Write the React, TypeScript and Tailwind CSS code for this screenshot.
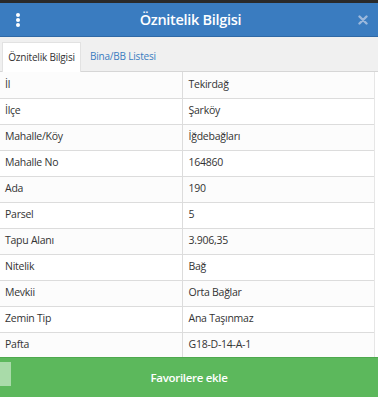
import React from "react"

const rows: [string, string][] = [
  ["İl", "Tekirdağ"],
  ["İlçe", "Şarköy"],
  ["Mahalle/Köy", "İğdebağları"],
  ["Mahalle No", "164860"],
  ["Ada", "190"],
  ["Parsel", "5"],
  ["Tapu Alanı", "3.906,35"],
  ["Nitelik", "Bağ"],
  ["Mevkii", "Orta Bağlar"],
  ["Zemin Tip", "Ana Taşınmaz"],
  ["Pafta", "G18-D-14-A-1"],
]

export default function App() {
  return (
    <div
      className="w-[378px] h-[397px] overflow-hidden bg-white flex flex-col relative"
      style={{ fontFamily: '"Open Sans", "Noto Sans", sans-serif' }}
    >
      <div className="h-[3px] bg-[#2a2a2a] shrink-0" />
      <header className="h-[34px] bg-[#3a7cc0] flex items-center justify-between pl-3 pr-[10px] shrink-0 border-b border-[#2f69a6]">
        <svg width="10" height="16" viewBox="0 0 10 16" className="ml-[1px]">
          <circle cx="5" cy="3" r="2" fill="#fff" />
          <circle cx="5" cy="8" r="2" fill="#fff" />
          <circle cx="5" cy="13" r="2" fill="#fff" />
        </svg>
        <h1 className="text-white text-[14.5px] font-semibold tracking-[-0.3px]">Öznitelik Bilgisi</h1>
        <svg width="10" height="10" viewBox="0 0 10 10">
          <path d="M1.5 1.5 L8.5 8.5 M8.5 1.5 L1.5 8.5" stroke="#9bb8dc" strokeWidth="2.4" strokeLinecap="round" />
        </svg>
      </header>
      <div className="h-[35px] bg-[#f0f0f0] flex items-end pl-[2px] border-b border-[#d6d6d6] shrink-0">
        <div className="h-[30px] w-[79px] bg-white border border-b-0 border-[#e2e2e2] flex items-center justify-center text-[10px] tracking-[-0.2px] text-[#333] -mb-px">
          Öznitelik Bilgisi
        </div>
        <div className="h-[30px] px-[9px] flex items-center text-[10px] tracking-[-0.2px] text-[#3a7cc0]">Bina/BB Listesi</div>
      </div>
      <div className="flex-1 pr-[3px]">
        <table className="w-full border-collapse text-[10.5px] tracking-[-0.25px] text-[#333]">
          <tbody>
            {rows.map(([k, v], i) => (
              <tr key={k} className={`h-[26px] border-b border-[#dcdcdc] ${i % 2 ? "bg-white" : "bg-[#fcfcfc]"}`}>
                <td className="w-[182px] pl-[5px] border-r border-[#dcdcdc]">{k}</td>
                <td className="pl-[6px] border-r border-[#e6e6e6]">{v}</td>
              </tr>
            ))}
          </tbody>
        </table>
      </div>
      <button className="absolute left-0 right-0 bottom-0 h-[40px] bg-[#5cb85c] text-white text-[11.5px] font-semibold tracking-[-0.3px] border-t border-[#4ea94e]">
        Favorilere ekle
      </button>
      <div className="absolute left-0 bottom-[11px] w-[11px] h-[24px] bg-[#a9dba9]" />
    </div>
  )
}
